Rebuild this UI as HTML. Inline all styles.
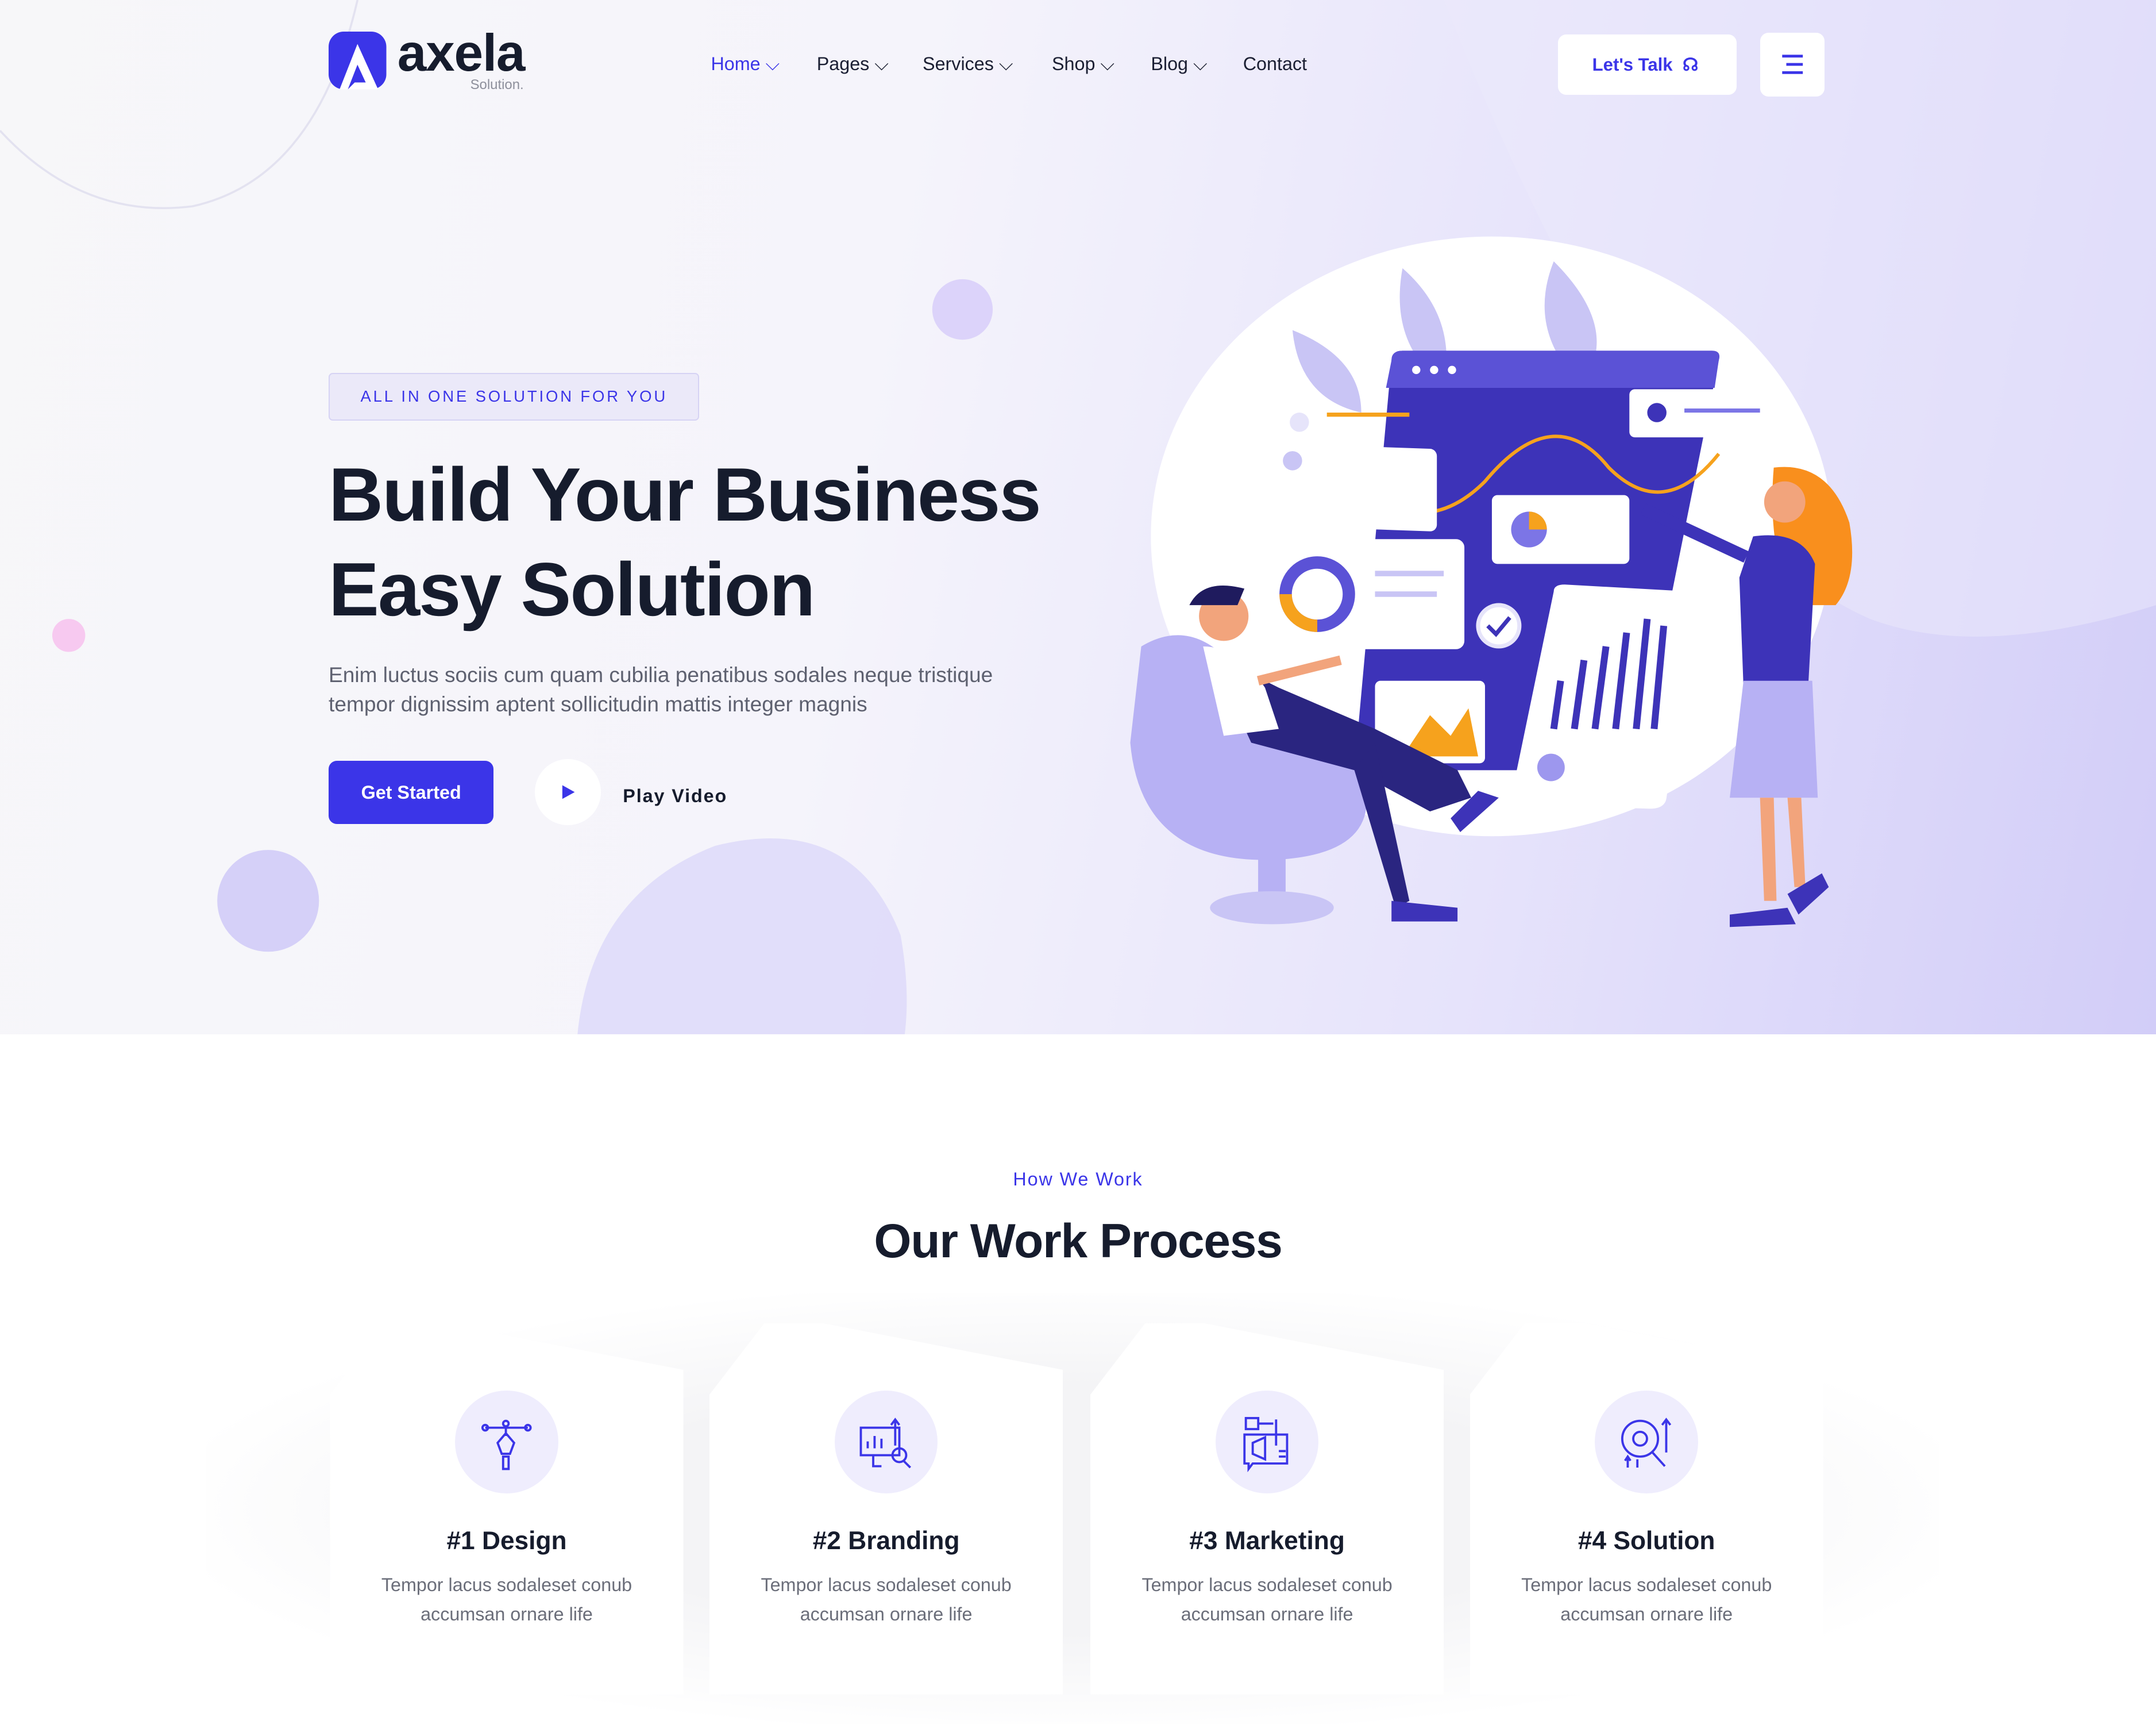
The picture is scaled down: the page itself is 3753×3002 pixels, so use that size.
<!DOCTYPE html>
<html><head><meta charset="utf-8"><style>
html,body{margin:0;padding:0;}
html{width:3753px;height:3002px;overflow:hidden;background:#fff}
body{zoom:2.3935;width:1568px;height:1254px;position:relative;font-family:"Liberation Sans",sans-serif;overflow:hidden}
.hero{position:absolute;left:0;top:0;width:1568px;height:752px;background:linear-gradient(100deg,#f7f7f9 0%,#f5f4fb 40%,#e6e3fb 70%,#d2cdf8 100%);overflow:hidden}
.nav a{position:absolute;top:39px;font-size:13.5px;color:#1b1f33}
.abs{position:absolute}
.card{position:absolute;top:962px;width:257px;height:270px;background:#fff;clip-path:polygon(0 52px,40px 0,82px 0,257px 34px,257px 270px,0 270px);}
.card .ic{position:absolute;left:91px;top:49px;width:75px;height:75px;border-radius:50%;background:#efedfd}
.card h3{position:absolute;left:0;right:0;top:148px;margin:0;text-align:center;font-size:18.5px;font-weight:bold;color:#161c2d}
.card p{position:absolute;left:0;right:0;top:180px;margin:0;text-align:center;font-size:13.5px;line-height:21px;color:#6b6e7a}
</style></head><body>
<div class="hero">
 <svg class="abs" style="left:0;top:0" width="1568" height="752">
  <path d="M0 95 Q60 160 140 150 Q230 130 260 0" fill="none" stroke="#e3e2f0" stroke-width="1.5"/>
  <path d="M1050 0 L1568 0 L1568 440 Q1440 480 1360 450 Q1200 380 1050 0Z" fill="#ebe9fb" opacity="0.5"/>
  <path d="M420 752 Q430 650 520 615 Q620 590 655 680 Q662 720 658 752Z" fill="#dcd8fa" opacity="0.8"/>
  <circle cx="700" cy="225" r="22" fill="#dcd3fa"/>
  <circle cx="50" cy="462" r="12" fill="#f7c9f0"/>
  <circle cx="195" cy="655" r="37" fill="#d5d0f8"/>
  <ellipse cx="1085" cy="390" rx="248" ry="218" fill="#fff"/>
  <path d="M1020 195 Q1060 230 1050 280 Q1010 250 1020 195Z M1130 190 Q1180 240 1150 280 Q1110 240 1130 190Z M940 240 Q990 260 990 300 Q945 290 940 240Z" fill="#c9c5f5"/>
  <path d="M1012 262 Q1012 255 1020 255 L1245 255 Q1252 255 1250 262 L1190 560 L985 560Z" fill="#3d33b8"/>
  <path d="M1012 262 Q1012 255 1020 255 L1245 255 Q1252 255 1250 262 L1247 282 L1008 282Z" fill="#5b52d6"/>
  <circle cx="1030" cy="269" r="3" fill="#fff"/><circle cx="1043" cy="269" r="3" fill="#fff"/><circle cx="1056" cy="269" r="3" fill="#fff"/>
  <path d="M995 360 Q1040 390 1080 350 Q1130 290 1170 340 Q1210 380 1250 330" fill="none" stroke="#f6a21d" stroke-width="2.5"/>
  <rect x="935" y="290" width="110" height="60" rx="5" fill="#fff" transform="skewY(2)"/>
  <rect x="965" y="300" width="60" height="3" fill="#f6a21d"/><circle cx="945" cy="307" r="7" fill="#e6e4fa"/><circle cx="940" cy="335" r="7" fill="#c9c5f5"/>
  <rect x="1185" y="283" width="110" height="35" rx="4" fill="#fff"/><circle cx="1205" cy="300" r="7" fill="#3d33b8"/><rect x="1225" y="297" width="55" height="3" fill="#7c75e6"/>
  <rect x="1085" y="360" width="100" height="50" rx="4" fill="#fff"/><circle cx="1112" cy="385" r="13" fill="#7c75e6"/><path d="M1112 385 L1112 372 A13 13 0 0 1 1125 385Z" fill="#f6a21d"/>
  <rect x="905" y="392" width="160" height="80" rx="6" fill="#fff"/><circle cx="958" cy="432" r="23" fill="none" stroke="#5b52d6" stroke-width="9"/><path d="M958 455 A23 23 0 0 1 935 432" fill="none" stroke="#f6a21d" stroke-width="9"/>
  <rect x="1000" y="415" width="50" height="4" fill="#c9c5f5"/><rect x="1000" y="430" width="45" height="4" fill="#c9c5f5"/>
  <circle cx="1090" cy="455" r="15" fill="#fff" stroke="#e6e4fa" stroke-width="3"/><path d="M1082 455 l6 6 10 -12" stroke="#3d33b8" stroke-width="3" fill="none"/>
  <path d="M1130 430 Q1130 425 1138 425 L1228 430 Q1235 430 1232 440 L1212 580 Q1211 588 1200 588 L1105 585 Q1098 585 1100 575Z" fill="#fff"/>
  <g stroke="#3d33b8" stroke-width="5"><line x1="1130" y1="530" x2="1135" y2="495"/><line x1="1145" y1="530" x2="1152" y2="480"/><line x1="1160" y1="530" x2="1168" y2="470"/><line x1="1175" y1="530" x2="1183" y2="460"/><line x1="1190" y1="530" x2="1198" y2="450"/><line x1="1203" y1="530" x2="1210" y2="455"/></g>
  <circle cx="1128" cy="558" r="10" fill="#9d97ee"/>
  <rect x="1000" y="495" width="80" height="60" rx="4" fill="#fff"/><path d="M1020 550 L1040 520 L1055 535 L1068 515 L1075 550Z" fill="#f6a21d"/>
  <path d="M830 470 Q880 440 920 520 L990 560 Q1010 620 930 625 Q830 630 822 540Z" fill="#b7b1f4"/>
  <rect x="915" y="620" width="20" height="35" fill="#b7b1f4"/><ellipse cx="925" cy="660" rx="45" ry="12" fill="#c9c5f5"/>
  <path d="M880 475 L930 500 L1000 530 L1060 560 L1070 580 L1040 590 L985 560 L910 540 Z" fill="#2a2580"/>
  <path d="M1000 540 L1025 655 L1015 660 L985 560Z" fill="#2a2580"/>
  <path d="M875 470 Q900 470 920 500 L930 530 L890 535 Z" fill="#fff"/>
  <circle cx="890" cy="448" r="18" fill="#f2a47c"/><path d="M865 440 Q875 420 905 428 L900 440 Z" fill="#1f1b5e"/>
  <path d="M915 495 L975 480" stroke="#f2a47c" stroke-width="7"/>
  <path d="M1012 655 L1060 660 L1060 670 L1012 670Z" fill="#3d33b8"/><path d="M1055 595 L1075 575 L1090 580 L1062 605Z" fill="#3d33b8"/>
  <path d="M1290 340 Q1330 335 1345 380 Q1352 420 1335 440 L1305 440 Q1285 400 1290 340Z" fill="#f98f1d"/>
  <circle cx="1298" cy="365" r="15" fill="#f2a47c"/>
  <path d="M1275 390 Q1310 385 1320 410 L1315 500 L1268 500 L1265 420Z" fill="#3d33b8"/>
  <path d="M1270 405 L1195 370" stroke="#3d33b8" stroke-width="9"/>
  <path d="M1268 495 L1318 495 L1322 580 L1258 580Z" fill="#b7b1f4"/>
  <path d="M1280 580 L1283 655 L1292 655 L1290 580Z M1300 580 L1305 645 L1313 645 L1310 580Z" fill="#f2a47c"/>
  <path d="M1258 665 L1300 660 L1306 672 L1258 674Z M1300 650 L1325 635 L1330 645 L1308 665Z" fill="#3d33b8"/>
 </svg>
 <svg class="abs" style="left:239px;top:23px" width="42" height="42" viewBox="0 0 42 42"><rect width="42" height="42" rx="11" fill="#3b35e8"/><path d="M21 9 L8 42 L14 42 L21 24 L27 37 L19 37 L14 42 L36 42Z" fill="#fff"/></svg>
 <div class="abs" style="left:289px;top:17px;font-size:38px;font-weight:bold;color:#161c2d;letter-spacing:-0.5px">axela</div>
 <div class="abs" style="left:342px;top:56px;font-size:10px;color:#8e909c">Solution.</div>
 <div class="nav">
  <a style="left:517px;color:#3b35e8">Home ⌵</a><a style="left:594px">Pages ⌵</a><a style="left:671px">Services ⌵</a><a style="left:765px">Shop ⌵</a><a style="left:837px">Blog ⌵</a><a style="left:904px">Contact</a>
 </div>
 <div class="abs" style="left:1133px;top:25px;width:130px;height:44px;background:#fff;border-radius:6px;font-size:13px;font-weight:bold;color:#3b35e8;line-height:44px;text-indent:25px">Let's Talk &nbsp;☊</div>
 <div class="abs" style="left:1280px;top:24px;width:47px;height:46px;background:#fff;border-radius:6px"><svg width="47" height="46"><g stroke="#3b35e8" stroke-width="2"><line x1="16" y1="17" x2="31" y2="17"/><line x1="19" y1="23" x2="31" y2="23"/><line x1="16" y1="29" x2="31" y2="29"/></g></svg></div>
 <div class="abs" style="left:239px;top:271px;width:268px;height:33px;border:1px solid #d6d3f4;background:#ebe9f9;border-radius:3px;font-size:11.5px;letter-spacing:1.6px;color:#3b35e8;line-height:33px;text-align:center">ALL IN ONE SOLUTION FOR YOU</div>
 <div class="abs" style="left:239px;top:325px;font-size:55px;line-height:69px;font-weight:bold;color:#161c2d;letter-spacing:-0.8px">Build Your Business<br>Easy Solution</div>
 <div class="abs" style="left:239px;top:480px;font-size:15.5px;line-height:21.5px;color:#5e6170">Enim luctus sociis cum quam cubilia penatibus sodales neque tristique<br>tempor dignissim aptent sollicitudin mattis integer magnis</div>
 <div class="abs" style="left:239px;top:553px;width:120px;height:46px;background:#3b35e8;border-radius:6px;color:#fff;font-size:13.5px;font-weight:bold;line-height:46px;text-align:center">Get Started</div>
 <div class="abs" style="left:389px;top:552px;width:48px;height:48px;border-radius:50%;background:#fff"><svg width="48" height="48"><path d="M20 19 L29 24 L20 29Z" fill="#3b35e8"/></svg></div>
 <div class="abs" style="left:453px;top:571px;font-size:13.5px;font-weight:bold;color:#161c2d;letter-spacing:0.8px">Play Video</div>
</div>
<div class="abs" style="left:0;top:752px;width:1568px;height:502px;background:#fff"></div>
<div class="abs" style="left:150px;top:940px;width:1260px;height:314px;background:radial-gradient(ellipse at center,#f4f4f6 40%,#fff 75%)"></div>
<div class="abs" style="left:0;width:1568px;top:850px;text-align:center;font-size:13.5px;color:#3b35e8;letter-spacing:0.8px">How We Work</div>
<div class="abs" style="left:0;width:1568px;top:882px;text-align:center;font-size:35px;font-weight:bold;color:#161c2d;letter-spacing:-0.5px">Our Work Process</div>
<div class="card" style="left:240px"><div class="ic"><svg width="75" height="75" fill="none" stroke="#3b35e8" stroke-width="1.6"><path d="M22 27 H53 M37 27 V33 M31 38 L37 31 L43 38 L40 46 H34Z M35 48 H39 V57 H35Z"/><circle cx="22" cy="27" r="2"/><circle cx="53" cy="27" r="2"/><circle cx="37" cy="24" r="2"/></svg></div><h3>#1 Design</h3><p>Tempor lacus sodaleset conub<br>accumsan ornare life</p></div>
<div class="card" style="left:516px"><div class="ic"><svg width="75" height="75" fill="none" stroke="#3b35e8" stroke-width="1.6"><rect x="19" y="27" width="28" height="20"/><path d="M24 42 V37 M29 42 V33 M34 42 V35 M44 40 V22 M41 25 L44 21 L47 25 M28 47 V55 H34"/><circle cx="47" cy="47" r="5"/><path d="M50 51 L55 56"/></svg></div><h3>#2 Branding</h3><p>Tempor lacus sodaleset conub<br>accumsan ornare life</p></div>
<div class="card" style="left:793px"><div class="ic"><svg width="75" height="75" fill="none" stroke="#3b35e8" stroke-width="1.6"><rect x="22" y="20" width="9" height="8"/><path d="M31 24 H42 M44 21 V40 M21 32 H52 V53 H27 L24 57 V53 H21Z M27 38 L36 34 V50 L27 46Z M46 44 H51 M46 48 H51"/></svg></div><h3>#3 Marketing</h3><p>Tempor lacus sodaleset conub<br>accumsan ornare life</p></div>
<div class="card" style="left:1069px"><div class="ic"><svg width="75" height="75" fill="none" stroke="#3b35e8" stroke-width="1.6"><circle cx="33" cy="35" r="13"/><circle cx="33" cy="35" r="5"/><path d="M42 45 L51 55 M52 45 V22 M49 25 L52 21 L55 25 M24 56 V49 M22 51 L24 48 L26 51 M31 56 V50"/></svg></div><h3>#4 Solution</h3><p>Tempor lacus sodaleset conub<br>accumsan ornare life</p></div>
</body></html>
